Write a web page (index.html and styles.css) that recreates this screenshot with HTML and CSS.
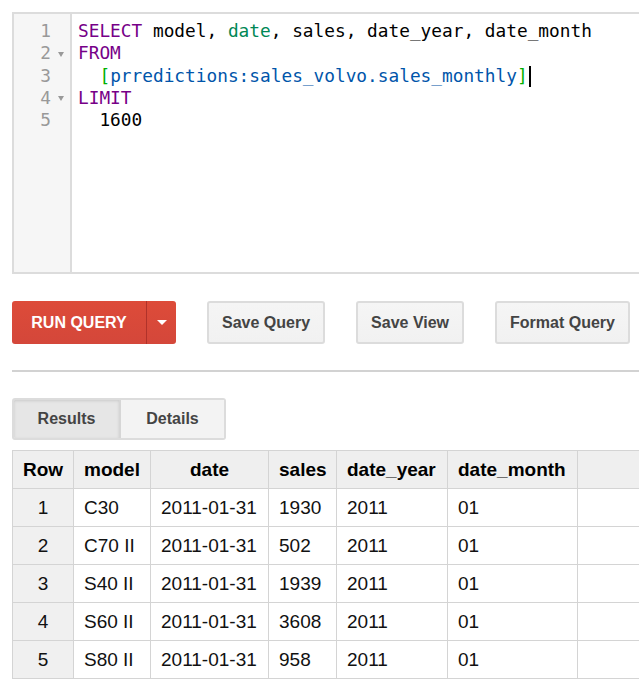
FILE: index.html
```html
<!DOCTYPE html>
<html>
<head>
<meta charset="utf-8">
<link rel="stylesheet" href="styles.css">
</head>
<body>
<div class="page">
  <div class="editor">
    <div class="gutter">
      <div class="gl"><span class="num">1</span><span class="fold"></span></div>
      <div class="gl"><span class="num">2</span><span class="fold"><i class="arrow"></i></span></div>
      <div class="gl"><span class="num">3</span><span class="fold"></span></div>
      <div class="gl"><span class="num">4</span><span class="fold"><i class="arrow"></i></span></div>
      <div class="gl"><span class="num">5</span><span class="fold"></span></div>
    </div>
    <div class="code">
      <div class="cl"><span class="kw">SELECT</span> model, <span class="ty">date</span>, sales, date_year, date_month</div>
      <div class="cl"><span class="kw">FROM</span></div>
      <div class="cl">  <span class="br">[</span><span class="tb">prredictions:sales_volvo.sales_monthly</span><span class="br">]</span><span class="cursor"></span></div>
      <div class="cl"><span class="kw">LIMIT</span></div>
      <div class="cl">  1600</div>
    </div>
  </div>

  <div class="actions">
    <div class="run">
      <span class="run-main">RUN QUERY</span>
      <span class="run-drop"><i class="caret"></i></span>
    </div>
    <span class="btn">Save Query</span>
    <span class="btn">Save View</span>
    <span class="btn">Format Query</span>
  </div>

  <div class="rule"></div>

  <div class="tabs">
    <span class="tab active">Results</span>
    <span class="tab">Details</span>
  </div>

  <table class="results">
    <colgroup>
      <col class="c-row"><col class="c-model"><col class="c-date"><col class="c-sales"><col class="c-year"><col class="c-month"><col class="c-fill">
    </colgroup>
    <thead>
      <tr><th class="center">Row</th><th>model</th><th class="center">date</th><th>sales</th><th>date_year</th><th>date_month</th><th class="fill"></th></tr>
    </thead>
    <tbody>
      <tr><td class="rn">1</td><td>C30</td><td>2011-01-31</td><td>1930</td><td>2011</td><td>01</td><td class="fill"></td></tr>
      <tr><td class="rn">2</td><td>C70 II</td><td>2011-01-31</td><td>502</td><td>2011</td><td>01</td><td class="fill"></td></tr>
      <tr><td class="rn">3</td><td>S40 II</td><td>2011-01-31</td><td>1939</td><td>2011</td><td>01</td><td class="fill"></td></tr>
      <tr><td class="rn">4</td><td>S60 II</td><td>2011-01-31</td><td>3608</td><td>2011</td><td>01</td><td class="fill"></td></tr>
      <tr><td class="rn">5</td><td>S80 II</td><td>2011-01-31</td><td>958</td><td>2011</td><td>01</td><td class="fill"></td></tr>
    </tbody>
  </table>
</div>
</body>
</html>
```
FILE: styles.css
```css
html, body {
  margin: 0;
  padding: 0;
  overflow: hidden;
  background: #fff;
}
.page {
  padding: 12px 0 0 12px;
  font-family: "Liberation Sans", Arial, sans-serif;
  width: 627px;
}
.editor {
  display: flex;
  height: 258px;
  border: 2px solid #dcdcdc;
  border-right: none;
  font-family: "DejaVu Sans Mono", "Liberation Mono", monospace;
  font-size: 17.8px;
  line-height: 22.25px;
}
.gutter {
  width: 56px;
  background: #f6f6f6;
  border-right: 2px solid #dcdcdc;
  padding-top: 6px;
}
.gl {
  display: flex;
  justify-content: flex-end;
  align-items: center;
  height: 22.25px;
  padding-right: 6px;
  color: #999;
}
.fold {
  width: 13px;
  display: flex;
  align-items: center;
  height: 100%;
}
.arrow {
  display: block;
  margin-left: 7px;
  margin-top: 2px;
  width: 0;
  height: 0;
  border-left: 3px solid transparent;
  border-right: 3px solid transparent;
  border-top: 5px solid #999;
}
.code {
  padding: 6px 0 0 6px;
  color: #000;
  flex: 1;
  min-width: 0;
  overflow: hidden;
}
.cl {
  height: 22.25px;
  white-space: pre;
}
.kw { color: #770088; }
.ty { color: #008855; }
.tb { color: #0055aa; }
.br { color: #00b000; }
.cursor {
  display: inline-block;
  width: 2px;
  height: 21px;
  background: #000;
  vertical-align: -5px;
  margin-left: 1px;
}

.actions {
  display: flex;
  gap: 31px;
  margin-top: 27px;
  height: 43px;
}
.run {
  display: flex;
  height: 43px;
  border-radius: 3px;
  overflow: hidden;
  background: linear-gradient(#dd4b39, #d4473a);
  color: #fff;
  font-weight: bold;
  font-size: 16px;
}
.run-main {
  width: 134px;
  display: flex;
  align-items: center;
  justify-content: center;
  border-right: 1px solid #b0322a;
}
.run-drop {
  width: 29px;
  display: flex;
  align-items: center;
  justify-content: center;
}
.caret {
  display: block;
  width: 0;
  height: 0;
  border-left: 5px solid transparent;
  border-right: 5px solid transparent;
  border-top: 5px solid #fff;
}
.btn {
  display: flex;
  align-items: center;
  padding: 0 13px;
  height: 39px;
  border: 2px solid #dcdcdc;
  border-radius: 3px;
  background: linear-gradient(#f5f5f5, #f1f1f1);
  color: #444;
  font-weight: bold;
  font-size: 16px;
}

.rule {
  margin-top: 26px;
  height: 2px;
  background: #d2d2d2;
}

.tabs {
  display: flex;
  margin-top: 26px;
  width: 210px;
  height: 38px;
  border: 2px solid #dcdcdc;
  border-radius: 3px;
  overflow: hidden;
  font-weight: bold;
  font-size: 16px;
  color: #444;
}
.tab {
  display: flex;
  align-items: center;
  justify-content: center;
  background: #f3f3f3;
  flex: 1;
}
.tab.active {
  flex: 0 0 105px;
  background: #e6e6e6;
  border-right: 2px solid #d6d6d6;
  box-shadow: inset 0 1px 3px rgba(0,0,0,0.12);
}

.results {
  margin-top: 10px;
  border-collapse: collapse;
  table-layout: fixed;
  width: 100%;
  font-size: 19px;
  color: #111;
}
.c-row { width: 61px; }
.c-model { width: 77px; }
.c-date { width: 118px; }
.c-sales { width: 68px; }
.c-year { width: 111px; }
.c-month { width: 130px; }
.results th, .results td {
  border: 1px solid #d4d4d4;
  height: 37px;
  padding: 0 10px;
  text-align: left;
  vertical-align: middle;
  white-space: nowrap;
}
.results th.fill, .results td.fill {
  border-right: none;
}
.results th {
  background: #efefef;
  font-weight: bold;
  color: #000;
}
.results th.center { text-align: center; padding: 0; }
.results td.rn {
  background: #f0f0f0;
  text-align: center;
  padding: 0;
}
```
